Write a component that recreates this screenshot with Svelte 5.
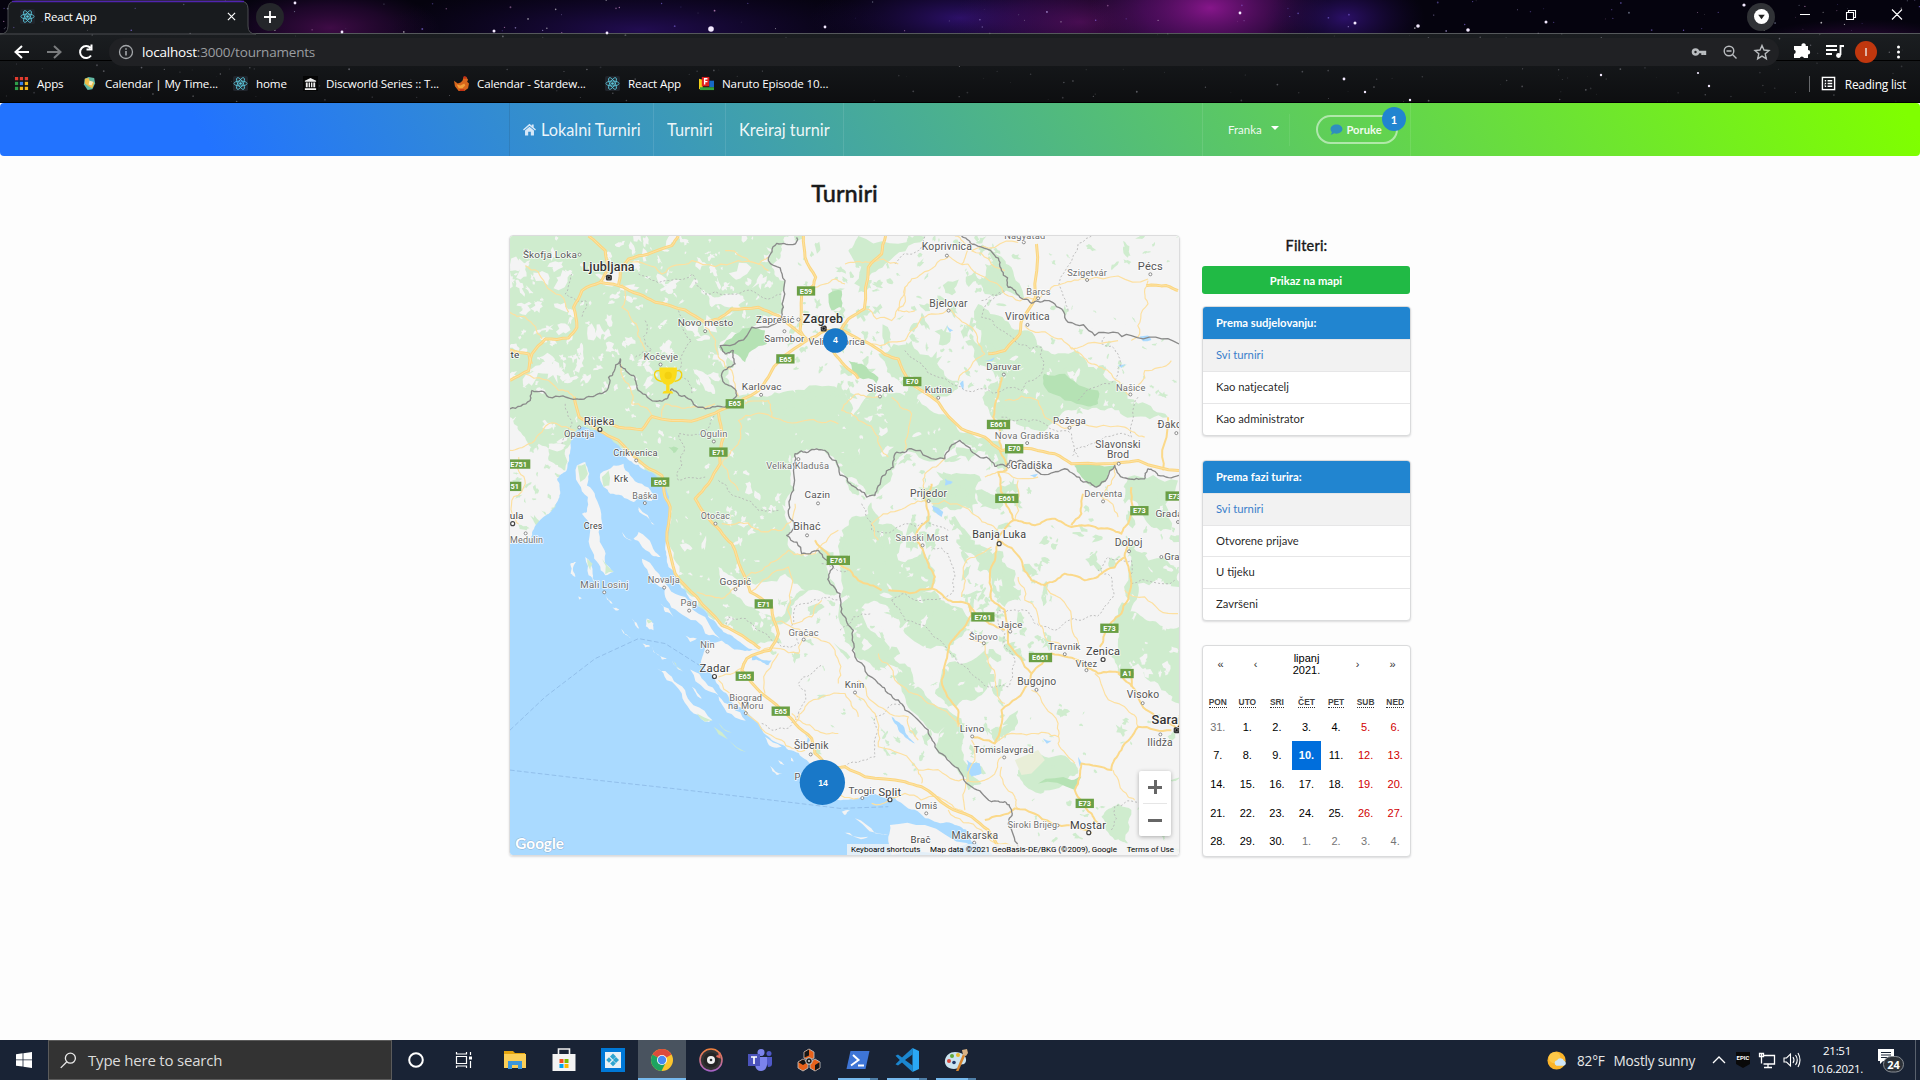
<script>
  // Deterministic pseudo random source, so that stars and map texture are stable.
  function makeRng(seed) {
    let s = seed;
    return () => {
      s = (s * 1664525 + 1013904223) % 4294967296;
      return s / 4294967296;
    };
  }

  const starRng = makeRng(77);
  const starColors = ['#fff', '#9a7dff', '#c9b8ff', '#7d6ad8', '#e6a3e0', '#8891a8'];
  const stars = Array.from({ length: 360 }, () => {
    const y = starRng() * 103;
    return {
      x: starRng() * 1920,
      y,
      r: 0.35 + starRng() * 0.6,
      o: (y > 33 ? 0.12 : 0.35) + starRng() * 0.35,
      c: y > 33 ? '#b9b9c4' : starColors[Math.floor(starRng() * 6)]
    };
  });
  const brightStars = [
    [711, 29, 2.8], [295, 3, 1.4], [494, 31, 1.5], [342, 32, 1.4], [825, 27, 1.4], [607, 33, 1.4],
    [1240, 13, 1.4], [1355, 23, 1.5], [1418, 26, 1.8], [1468, 30, 1.8], [1546, 22, 1.5], [1344, 79, 1.4],
    [1365, 92, 1.2], [1601, 75, 1.2], [1709, 86, 1.2], [1698, 73, 1.1], [1410, 100, 1.2], [1744, 5, 1.6]
  ];

  const rng = makeRng(2021);

  // Midpoint displacement turns a coarse outline into a natural looking line.
  function rough(text, amp = 0.16, depth = 2, close = false) {
    let pts = text.trim().split(/\s+/).map((p) => p.split(',').map(Number));
    if (close) pts = [...pts, pts[0]];
    for (let i = 0; i < depth; i++) {
      const out = [pts[0]];
      for (let k = 1; k < pts.length; k++) {
        const [ax, ay] = pts[k - 1];
        const [bx, by] = pts[k];
        const n = (rng() - 0.5) * 2 * amp;
        out.push([(ax + bx) / 2 - (by - ay) * n, (ay + by) / 2 + (bx - ax) * n]);
        out.push(pts[k]);
      }
      pts = out;
    }
    return 'M' + pts.map((p) => p[0].toFixed(1) + ' ' + p[1].toFixed(1)).join('L') + (close ? 'Z' : '');
  }

  function speck(x, y, size) {
    const n = 9 + Math.floor(rng() * 6);
    const turn = rng() * 3;
    const flat = 0.3 + rng() * 0.5;
    const pts = [];
    for (let i = 0; i < n; i++) {
      const a = (i / n) * Math.PI * 2;
      const r = size * (0.3 + rng() * 0.95);
      const px = Math.cos(a) * r;
      const py = Math.sin(a) * r * flat;
      pts.push((x + px * Math.cos(turn) - py * Math.sin(turn)).toFixed(1) + ',' + (y + px * Math.sin(turn) + py * Math.cos(turn)).toFixed(1));
    }
    return pts.join(' ');
  }

  function scatter(count, x0, y0, x1, y1, min, max) {
    return Array.from({ length: count }, () => speck(x0 + rng() * (x1 - x0), y0 + rng() * (y1 - y0), min + rng() * rng() * (max - min)));
  }

  const greenSpecks = [
    ...scatter(150, 850, 16, 1500, 500, 6, 44),
    ...scatter(70, 1450, 16, 2020, 600, 6, 28),
    ...scatter(80, 1000, 640, 1500, 1000, 8, 50),
    ...scatter(40, 1500, 740, 2020, 1000, 8, 38),
    ...scatter(80, 800, 1080, 1500, 1640, 6, 34),
    ...scatter(60, 1380, 960, 1640, 1300, 8, 38),
    ...scatter(50, 1400, 1400, 2020, 1860, 6, 24),
    ...scatter(30, 14, 640, 200, 900, 8, 26)
  ];
  const whiteSpecks = [
    ...scatter(270, 14, 16, 880, 480, 5, 42),
    ...scatter(60, 200, 430, 900, 900, 4, 24),
    ...scatter(70, 500, 800, 880, 1280, 5, 36),
    ...scatter(50, 1000, 440, 1500, 720, 4, 26),
    ...scatter(50, 1420, 280, 1900, 640, 4, 30),
    ...scatter(90, 1000, 900, 1500, 1600, 5, 34),
    ...scatter(50, 1750, 800, 2023, 1400, 5, 28),
    ...scatter(25, 14, 560, 200, 900, 6, 26)
  ];

  const forests = [
    '14,16 850,16 830,60 800,110 840,150 830,250 740,290 640,350 690,400 660,440 690,495 760,500 860,480 1005,480 1010,650 900,660 860,700 870,780 850,880 860,960 900,975 940,930 990,960 1000,1090 900,1090 860,1150 800,1190 830,1240 750,1250 700,1210 640,1180 570,1100 520,1040 480,930 495,830 460,750 400,700 340,650 240,600 200,620 180,720 130,700 80,660 40,600 14,560',
    '1005,640 1040,690 1110,800 1060,800 1020,740 940,670 900,640 760,520 1005,470 1040,560 1140,480 1230,500 1330,560 1400,610 1490,640 1500,700 1370,640 1320,680 1200,660 1160,720 1120,790 1080,800',
    '1420,220 1500,270 1570,300 1640,370 1720,360 1800,440 1900,520 1990,560 1880,560 1800,540 1700,540 1640,580 1600,600 1520,570 1460,560 1440,480 1480,450 1420,400',
    '1005,770 1100,800 1120,880 1200,930 1180,990 1250,960 1290,1020 1280,1080 1150,1090 1060,1060 1005,1000',
    '1005,1010 1060,1060 1120,1090 1190,1090 1290,1080 1330,1120 1400,1170 1370,1220 1330,1260 1200,1210 1150,1130 1080,1120 1120,1220 1200,1300 1240,1370 1300,1430 1380,1490 1300,1510 1230,1450 1180,1360 1080,1290 1050,1280 1005,1180',
    '1860,930 2023,1010 2023,1070 1900,1060 1870,1150 1840,1160 1880,980',
    '1830,1160 1900,1150 1960,1180 2023,1190 2023,1420 1960,1360 1900,1300 1860,1350 1820,1280',
    '1450,960 1530,1020 1540,1110 1500,1130 1460,1060',
    '1320,1310 1440,1260 1460,1320 1420,1400 1330,1430 1290,1390',
    '1540,1620 1620,1580 1710,1600 1720,1630 1680,1650 1580,1680',
    '1790,1760 1840,1720 1880,1740 1870,1840 1830,1830',
    '1260,20 1140,100 1080,170 1030,60 1060,16 1250,16',
    '1870,740 2020,750 2000,900 1940,890 1900,820 1860,800',
    '1240,770 1330,740 1430,750 1420,820 1350,840 1250,810',
    '1440,100 1520,110 1560,210 1440,190',
    '1320,1480 1380,1480 1370,1560 1430,1660 1390,1680 1300,1570',
    '1440,1500 1540,1440 1530,1500 1470,1540',
    '1120,370 1220,330 1290,390 1370,450 1340,490 1230,470 1160,440'
  ].map((p) => rough(p, 0.2, 3, true));

  const parks = [
    '640,350 690,310 740,290 780,300 785,340 740,360 720,395 690,370 655,365',
    '1618,430 1680,430 1740,470 1780,480 1780,520 1750,528 1680,510 1620,470',
    '1708,705 1830,705 1800,755 1770,770 1730,740',
    '1030,390 1070,400 1120,440 1115,460 1060,440',
    '490,650 520,655 505,668', '970,190 1010,180 1010,230 980,240', '1700,1650 1730,1640 1710,1680 1600,1660'
  ].map((p) => rough(p, 0.15, 2, true));

  const meadows = [
    '860,700 900,660 960,665 1005,720 1080,795 1110,800 1090,850 1010,900 1000,1000 950,950 900,980 850,910 870,790',
    '880,240 1005,240 1005,330 940,320 890,310', '270,130 350,110 340,160 300,165',
    '640,1010 700,1060 780,1090 800,1150 740,1130 680,1090', '720,1060 840,1030 900,1080 830,1160 760,1140',
    '130,640 190,650 100,640 14,700 14,930 80,900 160,740 175,720 130,690',
    '1440,740 1700,740 1740,790 1700,860 1560,900 1440,830', '1600,1120 1700,1230 1840,1230 1800,1420 1600,1400 1560,1300',
    '600,180 640,200 700,190 720,210 620,230', '560,410 600,430 630,490 600,480'
  ].map((p) => rough(p, 0.2, 3, true));

  // The open sea runs past the map's left and bottom edges.
  const sea = [
    '14,940 75,925 95,880 150,830 165,790 155,745 183,722 195,660 207,605 232,588 285,602 325,635 372,690 425,720 470,755 492,800 494,880 480,950 490,1010 520,1060 560,1110 610,1160 655,1205 705,1235 765,1262 720,1262 660,1240 640,1225 655,1230 600,1245 588,1300 628,1345 650,1380 690,1425 760,1480 800,1530 850,1560 905,1590 930,1620 950,1680 1000,1710 1060,1705 1100,1690 1165,1700 1210,1735 1280,1770 1350,1785 1385,1800 1400,1835 1440,1860 1480,1900 1500,2600 -900,2600 -900,960 -60,940',
    '740,1274 800,1290 790,1305 740,1290', '1385,1590 1425,1600 1430,1630 1400,1640 1385,1620',
    '1160,1460 1200,1500 1230,1540 1190,1510', '900,1510 915,1530 905,1550', '1615,1525 1640,1532 1625,1540', '1320,745 1345,755 1320,765'
  ].map((p) => rough(p, 0.12, 3, true));

  const lakes = [
    '1905,318 1930,315 1940,328 1915,332', '1840,405 1865,402 1850,412', '1280,825 1315,845 1310,860 1285,840',
    '1325,285 1345,300 1335,305', '1365,460 1375,450 1375,480', '1575,735 1600,730 1590,742', '1730,1600 1720,1580 1725,1610', '1440,390 1470,380 1460,392'
  ].map((p) => rough(p, 0.1, 1, true));

  const islands = [
    '215,705 240,695 252,730 245,765 270,800 288,850 280,905 298,960 300,1000 325,1025 300,1035 280,1000 262,965 255,900 230,850 245,845 248,800 220,760',
    '285,730 325,705 355,700 375,735 410,760 442,790 440,812 400,800 385,815 350,795 315,790 295,770',
    '385,925 400,905 440,945 466,980 440,975 405,940', '410,985 450,1020 490,1070 540,1100 600,1160 645,1225 600,1210 572,1170 520,1145 485,1110 480,1075 430,1030',
    '240,980 262,1030 268,1055 250,1035', '300,1095 322,1120 315,1118', '195,1000 212,995 203,1020 210,1040 196,1030', '218,1098 230,1104 222,1108',
    '322,1132 342,1138 330,1140', '380,1165 402,1195 390,1185', '425,1165 445,1180 445,1200 422,1188', '347,1195 378,1225 355,1210',
    '440,1250 485,1285 470,1288 445,1265', '535,1215 575,1225 555,1235', '412,1240 435,1247 420,1252',
    '455,1315 500,1340 540,1380 565,1425 622,1470 600,1475 555,1440 530,1390 485,1350', '500,1290 535,1325 515,1312',
    '555,1318 600,1355 640,1395 600,1378', '640,1398 680,1430 722,1472 690,1462 650,1422', '560,1370 590,1405 575,1395',
    '795,1608 832,1632 815,1635', '820,1590 838,1605 825,1600', '780,1520 830,1550 800,1550', '465,1120 505,1160 480,1145', '855,1580 866,1595 858,1592',
    '400,830 450,885 440,880 402,845', '350,905 380,930 365,925', '1155,1785 1260,1785 1390,1840 1330,1875 1160,1875 1150,1820', '1050,1765 1150,1815 1110,1810', '1010,1745 1035,1742 1020,1755', '1005,1800 1090,1820 1060,1825'
  ].map((p) => rough(p, 0.14, 2, true));
  const islandWoods = ['217,705 240,700 248,730 225,755', '290,740 310,720 312,765 295,770', '245,985 262,1000 255,1020', '290,985 325,1025 300,1032', '575,1450 622,1472 600,1475', '640,1478 680,1508 660,1502', '625,1490 670,1530 722,1566 690,1550 640,1512', '425,1168 442,1172 430,1180', '505,1293 530,1318 515,1310'].map((p) => rough(p, 0.14, 1, true));

  const motorways = [
    '250,16 300,60 310,110 285,155 230,180 205,230 215,290 190,322 120,325 80,370 70,420 14,450', '14,358 70,370 78,400',
    '520,16 500,45 430,70 370,85 345,120 340,165', '285,155 340,165 400,190 450,215 540,238 600,275 640,265 680,235 760,230 820,255 880,305 905,325',
    '895,16 900,80 932,140 925,165 890,190 885,300 905,330', '905,330 830,380 790,440 760,480 715,505 690,520 630,548 560,572 440,558 410,598 340,590 300,575',
    '207,500 222,560 280,600 340,630 400,690 470,735 480,800 495,830 485,930 510,1030 575,1100 650,1185 730,1230 765,1255',
    '640,548 655,620 645,700 610,760 570,805 600,850 645,900 680,940 710,1020 735,1085 800,1130 820,1210 795,1260 725,1285 710,1320 770,1390 830,1440 870,1480 920,1525 930,1570 970,1610 1020,1610 1080,1640 1200,1655 1250,1670 1330,1730 1400,1760 1450,1800 1480,1850',
    '905,330 960,300 1015,300 1085,335 1140,372 1180,385 1210,450 1300,515 1370,595 1440,620 1490,660 1580,655 1650,670 1700,700 1800,700 1900,690 2023,720',
    '975,350 1010,395 1050,430 1060,445', '1142,16 1130,70 1090,110 1078,235 1030,265 1005,300', '1595,40 1592,200 1550,270 1545,310 1500,360 1450,370', '1925,165 1985,165 2020,180'
  ].map((p) => rough(p, 0.05, 2));
  const highways = [
    '1485,660 1505,720 1480,725 1495,800 1520,850 1525,870 1480,920 1475,960 1455,1040 1460,1110 1500,1140 1510,1240 1580,1330 1570,1360 1490,1440 1470,1540 1400,1520',
    '1480,930 1550,990 1580,1050 1620,1065 1680,1030 1740,1050 1790,1030 1860,980 1875,940', '1525,870 1590,885 1650,865 1700,890 1780,895 1850,910 1870,880 1880,770',
    '1990,560 1975,720', '1700,885 1730,850 1735,790', '1860,980 1880,1060 1850,1150 1800,1210 1785,1250', '1580,1330 1640,1270 1720,1290 1780,1330 1850,1330 1885,1330 1880,1370',
    '1840,1330 1900,1400 1960,1470 2020,1500', '2000,1500 1900,1490 1850,1560 1820,1620 1730,1600 1710,1680 1760,1750 1780,1780', '1440,1770 1530,1735 1640,1780 1760,1810',
    '1150,1080 1280,1075 1330,1110 1390,1120 1400,1155 1360,1210 1330,1260 1310,1350 1360,1440 1365,1490', '930,930 1000,1000 1060,1050 1130,1080', '1390,1120 1440,1170 1500,1200',
    '1490,440 1480,480 1465,560 1490,660', '1280,760 1260,800 1270,870 1230,920 1260,980 1290,1040 1280,1075'
  ].map((p) => rough(p, 0.1, 3));
  const minorRoads = [
    '14,245 60,260 110,325', '60,105 120,160 190,245', '350,160 350,230 400,300 420,360', '370,90 470,130 560,90 700,90 790,120', '600,290 640,380 680,420 700,500',
    '345,400 370,460 380,520 440,558', '60,430 160,480 210,500', '470,560 480,520 560,530 630,520', '720,520 790,510 800,560 700,570 690,650 650,700', '800,560 900,570 1000,580',
    '14,660 70,640 130,580 210,600', '40,680 60,760 20,850 40,880', '650,880 750,895 830,900 870,820', '700,780 650,700', '575,1085 650,1105 710,1060 780,1010 850,960 930,970 1000,900',
    '735,1085 850,1010 860,1180 920,1160 950,1110', '800,1170 900,1220 990,1260 1000,1360', '765,1265 880,1270 890,1230', '720,1290 640,1340', '640,1350 720,1440 830,1530 900,1560', '780,1390 820,1270',
    '870,1480 900,1430 1020,1390 1060,1460', '860,1450 930,1500 1000,1510', '1330,75 1440,140 1500,190 1595,205', '1330,80 1250,130 1200,170 1180,240 1230,240', '1080,235 1160,270 1200,170',
    '1020,100 1090,95 1180,100', '1500,120 1400,60 1540,35', '1600,205 1670,160 1750,148 1930,145', '1930,150 1930,220 1905,310 1880,330', '1700,350 1760,400 1820,430 1875,495', '1100,340 1200,330 1250,260 1330,235 1400,290 1440,370',
    '1360,450 1440,370', '1560,285 1630,310 1700,355 1840,330', '1500,510 1600,510 1620,560 1690,592 1860,590 1920,620', '1880,480 1920,420 2000,390', '1125,500 1060,490 1010,540 1060,570 1120,620 1150,680', '1160,500 1220,550 1200,660',
    '1320,680 1260,730 1270,800', '1260,810 1180,840 1100,880 1120,930', '1280,820 1420,860 1480,900', '1440,740 1480,725 1600,740', '1830,700 1820,760 1790,800 1840,860', '1530,870 1540,750', '1370,1100 1380,1000 1460,950',
    '1390,1225 1440,1240 1470,1350 1500,1420', '1540,1040 1560,1110 1600,1160 1620,1220 1700,1260', '1620,1060 1700,1160 1720,1250', '1860,1080 1920,1100 2020,1150', '1580,1380 1660,1480 1660,1540 1710,1600', '1770,1330 1860,1430 1900,1490',
    '1470,1540 1580,1510 1660,1520', '1400,1530 1390,1650 1380,1740', '1120,1270 1180,1360 1270,1420 1360,1490', '1060,1350 1110,1420 1210,1460 1240,1530', '1050,1390 1110,1450 1120,1550 1240,1620 1250,1660', '1240,1620 1350,1650 1440,1650 1490,1580',
    '1490,1610 1530,1700 1540,1740', '1825,1620 1870,1700 1890,1710', '1100,1720 1200,1690 1300,1700 1380,1750', '1330,1740 1430,1800 1530,1850', '950,1700 1060,1705', '1370,100 1400,50 1350,16', '660,60 760,100 790,80', '930,170 990,145 1020,160'
  ].map((p) => rough(p, 0.16, 3));

  const frontiers = [
    '875,20 870,40 815,38 790,90 840,150 835,230 830,265 740,290 645,345 660,370 685,360 690,400 655,420 660,460 695,495 660,530 600,535 550,505 500,475 485,505 450,512 395,470 385,435 350,410 345,385 325,425 310,440 305,480 270,495 215,505 130,500 80,480 75,510 14,535',
    '1370,16 1400,40 1470,75 1490,120 1510,170 1545,200 1580,218 1600,212 1650,220 1690,275 1770,315 1880,315 2023,340',
    '1005,735 1040,765 1085,800 1110,795 1130,740 1165,710 1175,665 1220,655 1320,685 1365,630 1410,670 1470,708 1505,708 1515,690 1550,690 1600,725 1680,715 1735,755 1775,770 1830,705 1870,745 1920,745 1930,715 1960,735 2023,735',
    '1005,735 960,660 910,665 870,670 865,700 865,780 850,850 865,895 845,915 890,970 940,960 985,1010 975,1060 1005,1090 1020,1160 1045,1200 1050,1280 1120,1360 1150,1390 1200,1440 1270,1500 1290,1550 1350,1610 1400,1670 1460,1715 1500,1715 1520,1740 1510,1780 1540,1850'
  ].map((p) => rough(p, 0.18, 3));
  const counties = [
    '200,130 180,190 240,210 230,260', '400,130 480,150 560,130 600,190 720,180 830,190', '520,240 560,330 520,420 560,490', '180,520 200,580 170,640', '420,270 440,360 390,380', '630,545 600,600 520,610 530,700 520,750 600,740', '640,750 700,800 760,840 820,840',
    '655,1190 670,1160 760,1200 830,1250 880,1240 870,1130 940,1110 1005,1110', '880,1450 900,1380 880,1360 950,1300', '770,1480 800,1500 870,1470 880,1450', '1160,1110 1200,1090 1340,1090 1350,1040 1330,970 1280,950', '1160,1110 1200,1170 1330,1260 1380,1310 1450,1370 1510,1370 1530,1300 1500,1210 1480,1140 1560,1140 1590,1180 1650,1200 1730,1170 1810,1120 1820,1040 1780,1020 1810,980 1880,990 1880,1060 2010,1050',
    '1005,1200 1100,1150', '1005,1610 1110,1580 1120,1500 1110,1460 1200,1430', '1170,100 1240,60 1260,16', '1430,210 1500,180 1430,260 1490,300 1540,340 1610,350 1600,440 1550,480 1380,480 1260,410 1200,360', '1690,240 1670,180 1720,40 1760,16', '1800,320 1790,340 1840,370 1840,430 1720,510', '1490,560 1600,570 1700,610 1720,680', '1900,500 1880,620 1760,640 1700,680', '1820,1800 1830,1730 1910,1720', '950,1000 1030,1020', '1070,820 1100,900 1200,880 1330,900'
  ].map((p) => rough(p, 0.18, 3));
  const ferries = ['14,1500 120,1400 270,1285 400,1225 480,1240 590,1310', '14,1620 200,1642 500,1675 840,1715 1005,1735 1150,1730'];

  // [text, centre x, baseline y, font size, style, marker x, marker y]
  const towns = [
    ['Škofja Loka', 134, 81, 28, 'mid', 223, 72], ['Ljubljana', 310, 122, 35, 'big', 311, 141], ['Novo mesto', 601, 287, 28, 'mid', 600, 302], ['Zaprešić', 811, 276, 27, 'mid', 880, 267],
    ['Zagreb', 954, 276, 35, 'big', 956, 294], ['Samobor', 838, 334, 27, 'mid', 838, 302], ['Velika Gorica', 995, 342, 26, 'mid', 0, 0], ['Kočevje', 467, 388, 27, 'mid', 466, 402], ['Karlovac', 770, 480, 28, 'mid', 768, 493],
    ['te', 29, 382, 28, 'dark', 0, 0], ['Rijeka', 282, 583, 31, 'dark', 284, 597], ['Opatija', 222, 620, 26, 'mid', 222, 591], ['Ogulin', 626, 620, 26, 'soft', 626, 633], ['Crikvenica', 391, 678, 26, 'mid', 393, 690],
    ['Krk', 348, 755, 26, 'dark', 0, 0], ['Baška', 419, 805, 25, 'soft', 419, 818], ['Velika Kladuša', 878, 716, 26, 'soft', 880, 686], ['Cazin', 937, 803, 28, 'mid', 939, 819], ['Otočac', 631, 866, 25, 'soft', 631, 880],
    ['Cres', 264, 895, 25, 'dark', 0, 0], ['Bihać', 906, 899, 30, 'mid', 906, 915], ['ula', 34, 867, 28, 'dark', 22, 880], ['Medulin', 64, 937, 25, 'soft', 61, 909], ['Mali Losinj', 298, 1074, 27, 'soft', 297, 1086],
    ['Novalja', 476, 1059, 26, 'soft', 477, 1072], ['Gospić', 691, 1064, 28, 'mid', 691, 1077], ['Pag', 551, 1128, 26, 'soft', 552, 1141], ['Gračac', 896, 1217, 26, 'soft', 896, 1228], ['Nin', 607, 1252, 26, 'soft', 607, 1264],
    ['Zadar', 629, 1326, 32, 'dark', 628, 1339], ['Biograd', 722, 1412, 26, 'soft', 0, 0], ['na Moru', 722, 1438, 26, 'soft', 722, 1449], ['Šibenik', 919, 1558, 29, 'mid', 917, 1573], ['Primošten', 935, 1650, 26, 'mid', 0, 0],
    ['Koprivnica', 1326, 59, 29, 'mid', 1326, 75], ['Nagyatád', 1560, 24, 26, 'soft', 1557, 35], ['Szigetvár', 1747, 136, 26, 'soft', 1747, 148], ['Pécs', 1937, 117, 31, 'mid', 1937, 131], ['Barcs', 1601, 192, 26, 'soft', 1600, 203],
    ['Bjelovar', 1331, 228, 29, 'mid', 1331, 240], ['Virovitica', 1568, 268, 29, 'mid', 1568, 283], ['Daruvar', 1496, 419, 27, 'mid', 1497, 432], ['Sisak', 1126, 486, 30, 'mid', 1125, 498], ['Kutina', 1301, 488, 26, 'mid', 1300, 502],
    ['Našice', 1878, 481, 26, 'soft', 1877, 492], ['Požega', 1694, 581, 27, 'mid', 1694, 592], ['Nova Gradiška', 1567, 625, 27, 'soft', 1567, 638], ['Đakovo', 2012, 592, 29, 'mid', 2015, 608], ['Slavonski', 1840, 652, 29, 'mid', 0, 0],
    ['Brod', 1840, 684, 29, 'mid', 1842, 700], ['Gradiška', 1580, 717, 29, 'mid', 1511, 708], ['Prijedor', 1271, 799, 29, 'mid', 1271, 812], ['Derventa', 1796, 800, 26, 'soft', 1795, 813], ['Sanski Most', 1251, 931, 26, 'soft', 1253, 945],
    ['Banja Luka', 1483, 924, 30, 'dark', 1483, 940], ['Doboj', 1872, 948, 29, 'mid', 1873, 963], ['Gradačac', 2018, 861, 28, 'mid', 2020, 875], ['Gračanica', 2046, 989, 27, 'mid', 1970, 980], ['Jajce', 1517, 1193, 27, 'mid', 1516, 1204],
    ['Šipovo', 1436, 1228, 26, 'soft', 1437, 1239], ['Travnik', 1679, 1259, 27, 'mid', 1680, 1272], ['Zenica', 1795, 1274, 31, 'dark', 1795, 1288], ['Vitez', 1745, 1309, 26, 'mid', 1745, 1320], ['Bugojno', 1596, 1364, 29, 'mid', 1595, 1379],
    ['Knin', 1049, 1375, 27, 'mid', 1050, 1387], ['Visoko', 1915, 1405, 29, 'mid', 1914, 1419], ['Sarajevo', 2017, 1481, 36, 'big', 2016, 1500], ['Ilidža', 1966, 1549, 29, 'mid', 1967, 1513], ['Livno', 1402, 1507, 28, 'mid', 1402, 1519],
    ['Tomislavgrad', 1497, 1570, 27, 'mid', 1498, 1582], ['Trogir', 1071, 1692, 28, 'mid', 1072, 1704], ['Split', 1155, 1698, 31, 'dark', 1155, 1709], ['Omiš', 1264, 1736, 26, 'mid', 1264, 1750], ['Siroki Brijeg', 1583, 1795, 25, 'soft', 1658, 1786],
    ['Mostar', 1750, 1796, 31, 'dark', 1752, 1808], ['Makarska', 1410, 1826, 29, 'mid', 1408, 1838], ['Brač', 1247, 1840, 27, 'dark', 0, 0]
  ];

  const shields = [
    ['E59', 903, 181], ['E65', 841, 385], ['E65', 689, 520], ['E71', 640, 665], ['E65', 465, 755], ['E751', 40, 701], ['51', 28, 768], ['E70', 1222, 453], ['E661', 1481, 582], ['E70', 1528, 655], ['E661', 1506, 804],
    ['E73', 1904, 841], ['E73', 2010, 797], ['E761', 1000, 990], ['E71', 776, 1121], ['E65', 719, 1338], ['E65', 827, 1443], ['E761', 1434, 1160], ['E73', 1814, 1194], ['E661', 1607, 1282], ['A1', 1867, 1330], ['E73', 1740, 1720]
  ];

  const bookmarks = [
    { icon: 'apps', label: 'Apps', w: 68 }, { icon: 'stone', label: 'Calendar | My Time...', w: 151 }, { icon: 'react', label: 'home', w: 70 },
    { icon: 'bank', label: 'Discworld Series :: T...', w: 151 }, { icon: 'hen', label: 'Calendar - Stardew...', w: 151 }, { icon: 'react', label: 'React App', w: 94 }, { icon: 'af', label: 'Naruto Episode 10...', w: 140 }
  ];

  const filters = [
    { title: 'Prema sudjelovanju:', items: ['Svi turniri', 'Kao natjecatelj', 'Kao administrator'] },
    { title: 'Prema fazi turira:', items: ['Svi turniri', 'Otvorene prijave', 'U tijeku', 'Završeni'] }
  ];
  const weekdays = ['PON', 'UTO', 'SRI', 'ČET', 'PET', 'SUB', 'NED'];
  const days = [31, ...Array.from({ length: 30 }, (_, i) => i + 1), 1, 2, 3, 4].map((n, i) => ({
    n, out: i === 0 || i > 30, weekend: i % 7 > 4, today: i === 10
  }));
  const apps = ['explorer', 'store', 'kodi', 'chrome', 'groove', 'teams', 'hex', 'shell', 'code', 'paint'];
</script>

{#snippet reactIcon()}
  <svg class="fav" viewBox="0 0 16 16"><rect width="16" height="16" rx="2" fill="#20242b" /><g fill="none" stroke="#5cc8dd" stroke-width=".9"><ellipse cx="8" cy="8" rx="7" ry="2.7" /><ellipse cx="8" cy="8" rx="7" ry="2.7" transform="rotate(60 8 8)" /><ellipse cx="8" cy="8" rx="7" ry="2.7" transform="rotate(120 8 8)" /></g><circle cx="8" cy="8" r="1.4" fill="#5cc8dd" /></svg>
{/snippet}

<div class="screen">
  <header class="browser">
    <svg class="sky" viewBox="0 0 1920 103">
      <defs>
        <radialGradient id="neb"><stop offset="0" stop-color="#8d1791" stop-opacity=".95" /><stop offset=".55" stop-color="#5d0f70" stop-opacity=".6" /><stop offset="1" stop-color="#40105a" stop-opacity="0" /></radialGradient>
        <radialGradient id="neb2"><stop offset="0" stop-color="#35137e" stop-opacity=".8" /><stop offset="1" stop-color="#1c0844" stop-opacity="0" /></radialGradient>
        <linearGradient id="bar" x2="0" y2="1"><stop offset="0" stop-color="#1b1e21" /><stop offset="1" stop-color="#0d0e10" /></linearGradient>
      </defs>
      <rect width="1920" height="103" fill="#05030e" />
      <ellipse cx="330" cy="28" rx="110" ry="40" fill="url(#neb)" opacity=".45" />
      <ellipse cx="640" cy="30" rx="260" ry="50" fill="url(#neb2)" opacity=".75" />
      <ellipse cx="960" cy="18" rx="150" ry="45" fill="url(#neb2)" />
      <ellipse cx="1080" cy="22" rx="130" ry="50" fill="url(#neb)" opacity=".5" />
      <ellipse cx="1210" cy="8" rx="120" ry="64" fill="url(#neb)" />
      <ellipse cx="1345" cy="18" rx="80" ry="45" fill="url(#neb2)" />
      <ellipse cx="1860" cy="45" rx="110" ry="26" fill="url(#neb)" opacity=".35" />
      <rect y="33" width="1920" height="70" fill="url(#bar)" />
      <rect y="33" width="1920" height="1" fill="#55585b" />
      <rect y="60" width="1920" height="1" fill="#000" />
      <path d="M0 34q8 0 8-8V9q0-8 8-8H240q8 0 8 8V26q0 8 8 8z" fill="#181b1e" stroke="#4a4d50" />
      <path d="M12 1.5H244" stroke="#5024b0" stroke-width="1.5" />
      {#each stars as s}<circle cx={s.x} cy={s.y} r={s.r} fill={s.c} opacity={s.o} />{/each}
      {#each brightStars as [x, y, r]}<circle cx={x} cy={y} {r} fill="#f3e9ff" />{/each}
      <rect y="102" width="1920" height="1" fill="#000" />
    </svg>
    <div class="tabs">
      <div class="tab">{@render reactIcon()}<span class="ui">React App</span><svg class="x" viewBox="0 0 10 10"><path d="M1 1l8 8M9 1l-8 8" /></svg></div>
      <div class="plus"><svg viewBox="0 0 12 12"><path d="M6 0v12M0 6h12" /></svg></div>
      <div class="grow"></div>
      <div class="caret"><svg viewBox="0 0 16 16"><circle cx="8" cy="8" r="8" fill="#fff" /><path d="M4.5 6h7L8 11z" fill="#222" /></svg></div>
      <svg class="wins" viewBox="0 0 138 28" fill="none" stroke="#fff" stroke-width="1.1"><path d="M18 14.5h10M64.500 12.500h7v7h-7zM66.500 12.500v-2h7v7h-2M110 9.500l10 10M120 9.500l-10 10" /></svg>
    </div>
    <div class="toolbar">
      <svg class="navs" viewBox="0 0 109 36" fill="none" stroke="#fff" stroke-width="2"><path d="M29 18H16M22 12l-6.500 6 6.500 6" /><path d="M47 18h13M54 12l6.500 6-6.500 6" stroke="#7a7c7e" /><path d="M91 21.500A6 6 0 1 1 90.500 14M91.500 10.500v5h-5" /></svg>
      <div class="omni">
        <svg class="o16" viewBox="0 0 16 16" fill="none" stroke="#a4a7aa" stroke-width="1.3"><circle cx="8" cy="8" r="6.500" /><path d="M8 7v4.500M8 4.300v1.400" stroke-width="1.600" /></svg>
        <span class="url"><b>localhost</b>:3000/tournaments</span>
        <svg class="omni-icons" viewBox="0 0 90 20" fill="none" stroke="#b9bcbf" stroke-width="1.400">
          <circle cx="6.500" cy="10" r="2.500" stroke-width="2.600" /><path d="M9 10h7v3M13.500 10v3" stroke-width="2.400" />
          <circle cx="40" cy="9" r="4.800" /><path d="M43.500 12.500l4 4M37.500 9h5" /><path d="M73 3.500l2 4.500 5 .5-3.800 3.300 1.100 4.900L73 14.100l-4.300 2.600 1.100-4.900L66 8.500l5-.5z" />
        </svg>
      </div>
      <svg class="ext" viewBox="0 0 141 36"><path d="M21 12h3.500a2.200 2.200 0 1 1 4.200 0H31v4a2.200 2.200 0 1 1 0 4.400V24H27a2.200 2.200 0 0 0-4.200 0H17v-4a2.200 2.200 0 0 0 0-4.300V12z" fill="#fff" transform="translate(-2 0)" /><path d="M47 12h11M47 16h11M47 20h6M61.500 21v-9h3.500" fill="none" stroke="#fff" stroke-width="1.800" /><circle cx="59.500" cy="21.500" r="2.400" fill="#fff" /><circle cx="87" cy="18" r="11" fill="#c0370e" /><path d="M87 14v8" stroke="#e9d3cc" stroke-width="1.600" /><g fill="#fff"><circle cx="119.500" cy="13" r="1.500" /><circle cx="119.500" cy="18" r="1.500" /><circle cx="119.500" cy="23" r="1.500" /></g></svg>
    </div>
    <div class="marks">
      {#each bookmarks as b}
        <div class="mark" style:width="{b.w}px">
          {#if b.icon === 'react'}{@render reactIcon()}
          {:else if b.icon === 'apps'}
            <svg class="fav" viewBox="0 0 16 16"><path d="M1 1h3.500v3.500H1zM6.200 1h3.500v3.500H6.200zM11.500 1H15v3.500h-3.500z" fill="#e23c2f" /><path d="M1 6.200h3.500v3.500H1z" fill="#2f9f4a" /><path d="M6.200 6.200h3.500v3.500H6.200z" fill="#3a80e8" /><path d="M11.500 6.200H15v3.500h-3.500z" fill="#f2b61c" /><path d="M1 11.500h3.500V15H1z" fill="#2f9f4a" /><path d="M6.200 11.500h3.500V15H6.200zM11.500 11.500H15V15h-3.500z" fill="#f2b61c" /></svg>
          {:else if b.icon === 'stone'}
            <svg class="fav" viewBox="0 0 16 16"><path d="M3 3l4-2 6 1 1 6-3 6-5 1-4-6z" fill="#63b9a4" /><path d="M3 3l4-1 1 3 5 2-2 6-4-2-4-3z" fill="#f0c14a" /><path d="M8 5l4 1-2 4-3-1z" fill="#f7eec2" /></svg>
          {:else if b.icon === 'bank'}
            <svg class="fav" viewBox="0 0 16 16"><rect width="16" height="16" fill="#050505" /><path d="M2 5l6-3 6 3v1H2zM3 7h2v5H3zM6 7h1.500v5H6zM8.500 7H10v5H8.500zM11 7h2v5h-2zM2 13h12v2H2z" fill="#eee" /></svg>
          {:else if b.icon === 'hen'}
            <svg class="fav" viewBox="0 0 16 16"><path d="M0 5l4 3 3-1 2-2 1-3 3-1 2 3-1 2 2 2-1 5-4 3H5L1 11z" fill="#d8661c" /><path d="M3 9l4 1 4-2 1 2-3 3H5z" fill="#f4a13b" /><path d="M9.500 1l2-1 2 1v2h-3zM6 14h5v2H6z" fill="#c43216" /></svg>
          {:else}
            <svg class="fav" viewBox="0 0 16 16"><path d="M0 3l4 1v9l-4 1z" fill="#f2cf19" /><path d="M3 1h8v10H3z" fill="#e02020" /><path d="M11 5h5v7h-5z" fill="#1769c7" /><path d="M1 12h15v3H1z" fill="#37a33b" /><path d="M6 9V3h3M6 6h3" stroke="#fff" stroke-width="1.500" fill="none" /></svg>
          {/if}
          <span class="ui">{b.label}</span>
        </div>
      {/each}
      <div class="grow"></div>
      <div class="reading"><svg viewBox="0 0 16 16" fill="none" stroke="#fff" stroke-width="1.500"><rect x="1.500" y="1.500" width="13" height="13" /><path d="M4 5h1.500M7 5h5M4 8h1.500M7 8h5M4 11h1.500M7 11h5" /></svg><span class="ui">Reading list</span></div>
    </div>
  </header>

  <nav class="nav">
    <div class="inner">
      <div class="item brand"><svg viewBox="0 0 14 14"><path d="M7 .8L0 7l1 1 6-5 6 5 1-1-2.500-2.200V1.500h-2v1.500zM2.200 8L7 4l4.800 4v5.500H8.400V9.500H5.600v4H2.200z" /></svg>Lokalni Turniri</div>
      <div class="item">Turniri</div>
      <div class="item last">Kreiraj turnir</div>
      <div class="grow"></div>
      <div class="right">
        <div class="user">Franka<i></i></div>
        <div class="pill"><svg viewBox="0 0 14 12"><path d="M7 .5c3.600 0 6.500 2.200 6.500 5s-2.900 5-6.500 5c-1 0-1.900-.2-2.700-.5C3.400 11 2 11.600.6 11.600 1.500 10.800 2 9.800 2 8.800 1 8 .5 6.800.5 5.500c0-2.800 2.900-5 6.500-5z" /></svg>Poruke<em>1</em></div>
      </div>
    </div>
  </nav>

  <main class="page">
    <section class="left">
      <h1>Turniri</h1>
      <div class="map">
        <svg viewBox="14 16 2009 1859" preserveAspectRatio="none">
          <rect x="14" y="16" width="2009" height="1859" fill="#f4f4f4" />
          <g fill="#cfecce">
            {#each forests as d}<path {d} />{/each}
          </g>
          <g fill="#f4f4f4">
            {#each meadows as d}<path {d} />{/each}
            {#each whiteSpecks as p}<polygon points={p} />{/each}
          </g>
          <g fill="#cfecce">{#each greenSpecks as p}<polygon points={p} />{/each}</g>
          <g fill="#b5e2b4">{#each parks as d}<path {d} />{/each}</g>
          <path d="M1530 1590l70-30 20 30-40 40-30 5z" fill="#e9eed8" />
          <g fill="#aadaff">{#each [...sea, ...lakes] as d}<path {d} />{/each}</g>
          <g fill="#f4f4f4">{#each islands as d}<path {d} />{/each}</g>
          <g fill="#cfecce">{#each islandWoods as d}<path {d} />{/each}</g>
          <g fill="none" stroke="#b3b3b3" stroke-width="2.500" stroke-dasharray="6 6">{#each counties as d}<path {d} />{/each}</g>
          <g fill="none" stroke="#8db9e6" stroke-width="2.500" stroke-dasharray="14 7">{#each ferries as p}<polyline points={p} />{/each}</g>
          <g fill="none" stroke-linejoin="round">
            <g stroke="#fde0a0" stroke-width="3.500">{#each minorRoads as d}<path {d} />{/each}</g>
            <g stroke="#fbd98a" stroke-width="6">{#each highways as d}<path {d} />{/each}</g>
            <g stroke="#fbd681" stroke-width="9">{#each motorways as d}<path {d} />{/each}</g>
            <g stroke="#fee9b5" stroke-width="2">{#each motorways as d}<path {d} />{/each}</g>
            <g stroke="#8a8a8a" stroke-width="4">{#each frontiers as d}<path {d} />{/each}</g>
          </g>
          {#each shields as [t, x, y]}
            <rect x={x - t.length * 7.5 - 5} y={y - 14} width={t.length * 15 + 10} height="28" fill="#6a9f44" />
            <text class="shield" {x} y={y + 8}>{t}</text>
          {/each}
          {#each towns as [t, x, y, size, kind, mx, my]}
            {#if mx}
              {#if kind === 'big'}<rect x={mx - 9} y={my - 9} width="18" height="18" rx="5" fill="#333" /><circle cx={mx} cy={my} r="4.500" fill="#111" stroke="#aaa" stroke-width="1.500" />
              {:else}<circle cx={mx} cy={my} r={kind === 'dark' ? 6 : 4.5} fill="#fff" stroke={kind === 'dark' ? '#444' : '#777'} stroke-width={kind === 'dark' ? 3.5 : 2.5} />{/if}
            {/if}
            <text class="town {kind}" {x} {y} font-size={size * 1.07}>{t}</text>
          {/each}
          <g stroke="#f5d20a" fill="none" stroke-width="4"><path d="M464 421c-22-6-22 28 6 32M514 421c22-6 22 28-6 32" /><path d="M463 411h52c2 30-6 48-22 52v18c6 0 10 2 11 8h-32c1-6 5-8 11-8v-18c-14-4-22-22-20-52z" fill="#fbdc1c" stroke="none" /><circle cx="489" cy="435" r="11" fill="#f3d010" stroke="none" /></g>
          <circle cx="991" cy="330" r="37" fill="#1978c8" /><text class="count" x="991" y="338">4</text>
          <circle cx="952" cy="1657" r="68" fill="#1978c8" /><text class="count" x="954" y="1667">14</text>
          <text class="google" x="30" y="1856">Google</text>
        </svg>
        <div class="zoom"><span class="p"></span><span class="m"></span></div>
        <div class="legal"><span>Keyboard shortcuts</span><span>Map data ©2021 GeoBasis-DE/BKG (©2009), Google</span><span>Terms of Use</span></div>
      </div>
    </section>
    <aside class="side">
      <h2>Filteri:</h2>
      <button>Prikaz na mapi</button>
      {#each filters as f}
        <ul class="menu"><li class="head">{f.title}</li>{#each f.items as it, i}<li class:active={i === 0}>{it}</li>{/each}</ul>
      {/each}
      <div class="cal">
        <div class="calnav"><span>«</span><span>‹</span><span class="month">lipanj<br />2021.</span><span>›</span><span>»</span></div>
        <div class="grid wd">{#each weekdays as w}<span><abbr>{w}</abbr></span>{/each}</div>
        <div class="grid">{#each days as d}<span class="day" class:weekend={d.weekend} class:out={d.out} class:today={d.today}>{d.n}.</span>{/each}</div>
      </div>
    </aside>
  </main>

  <footer class="task">
    <div class="start"><svg viewBox="0 0 16 16" fill="#fff"><path d="M0 2.200l6.600-.9v6.200H0zM7.400 1.200L16 0v7.500H7.400zM0 8.300h6.600v6.200L0 13.700zM7.400 8.300H16V16l-8.600-1.200z" /></svg></div>
    <div class="search"><svg viewBox="0 0 18 18" fill="none" stroke="#e8e8e8" stroke-width="1.400"><circle cx="11" cy="6.500" r="5.300" /><path d="M7 10.500L.8 16.800" /></svg><span>Type here to search</span></div>
    <div class="ico"><svg viewBox="0 0 24 24"><circle cx="12" cy="12" r="6.800" fill="none" stroke="#fff" stroke-width="2" /></svg></div>
    <div class="ico tv"><svg viewBox="0 0 24 24" fill="none" stroke="#fff" stroke-width="1.200"><path d="M4.500 8.500h10v7h-10zM4.500 4v2h10V4M4.500 20v-2h10v2M18.500 4v3M18.500 13v7" /><path d="M17 8.500h3v3h-3z" fill="#fff" stroke="none" /></svg></div>
    {#each apps as a}
      <div class="ico app" class:on={a === 'chrome'} class:run={a === 'shell' || a === 'code' || a === 'paint'}>
        <svg viewBox="0 0 24 24">
          {#if a === 'explorer'}<path d="M1 3h9l2 2h10v15H1z" fill="#e5a50f" /><path d="M1 6h22v14H1z" fill="#fccf57" /><path d="M5 13h14v8h-4v-4H9v4H5z" fill="#3c97dd" />
          {:else if a === 'store'}<path d="M6.500 6V1h11v5" fill="none" stroke="#eee" stroke-width="1.600" /><path d="M.5 6h23v17H.5z" fill="#f3f3f3" /><path d="M7.500 11h4v4h-4z" fill="#f25022" /><path d="M12.500 11h4v4h-4z" fill="#7fba00" /><path d="M7.500 16h4v4h-4z" fill="#00a4ef" /><path d="M12.500 16h4v4h-4z" fill="#ffb900" />
          {:else if a === 'kodi'}<path d="M0 0h24v24H0z" fill="#0078d7" /><path d="M4 4h16v16H4z" fill="#e9f1f6" /><path d="M12 5.500l3 3-3 3-3-3zM8 9.200l2.800 2.800L8 14.800 5.200 12zM15 9l3 3-3 3-3-3zM12 12.700l2.800 2.800-2.800 2.800-2.800-2.800z" fill="#2fa5d0" />
          {:else if a === 'chrome'}<circle cx="12" cy="12" r="11" fill="#fbc52e" /><path d="M12 12L2.500 6.500A11 11 0 0 1 21.500 6.500z" fill="#dd4b3c" /><path d="M12 12L2.500 6.500A11 11 0 0 0 11.500 23l4-8z" fill="#1ea361" /><circle cx="12" cy="12" r="5" fill="#fff" /><circle cx="12" cy="12" r="4.200" fill="#4a8af4" />
          {:else if a === 'groove'}<defs><linearGradient id="gr" x2="0" y2="1"><stop stop-color="#f0803c" /><stop offset="1" stop-color="#a763c9" /></linearGradient></defs><circle cx="12" cy="12" r="11" fill="#333" stroke="url(#gr)" stroke-width="1.600" /><circle cx="12" cy="12" r="7.500" fill="#252525" /><path d="M20.500 4.500v4.500l-3-1" fill="none" stroke="#e06a5a" stroke-width="2" /><circle cx="12" cy="12" r="4" fill="#f2f2f2" /><circle cx="12" cy="12" r="1.300" fill="#333" />
          {:else if a === 'teams'}<circle cx="13" cy="4.500" r="3.500" fill="#7b83eb" /><circle cx="21" cy="5.500" r="2.500" fill="#5059c9" /><path d="M17 9h7v7q0 3-4 3z" fill="#5059c9" /><path d="M7 9h12v8q-1 6-6 6t-6-6z" fill="#7b83eb" /><path d="M0 6h12v12H0z" fill="#4b53bc" /><path d="M3 9h6M6 9v7" stroke="#fff" stroke-width="1.700" />
          {:else if a === 'hex'}<g fill="#e8621b" stroke="#bbb" stroke-width=".9"><path d="M12 1l5 3v6l-5 3-5-3V4zM6 11l5 3v6l-5 3-5-3v-6zM18 11l5 3v6l-5 3-5-3v-6z" /></g><path d="M12 1.500v6l-4.500 2V4.300zM1.500 14.300L6 17l4.500-2.700L6 11.500zM18 17v5.500l4.500-2.700v-5.500z" fill="#151515" /><circle cx="12" cy="13" r="3.300" fill="#222" stroke="#ccc" /><circle cx="12" cy="13" r="1" fill="#ddd" />
          {:else if a === 'shell'}<path d="M4.500 3h19l-4 18h-19z" fill="#3e75d6" /><path d="M7 7l5.500 5L5 17.500M12 17.500h6" stroke="#fff" stroke-width="2" fill="none" />
          {:else if a === 'code'}<path d="M17.500 0v6.500L10 12l7.500 5.500V24L7 14.500l-4 3-2.500-1.300L4.800 12 .5 7.800 3 6.500l4 3z" fill="#1b86cf" /><path d="M17.500 0L24 3v18l-6.500 3z" fill="#2aa7f5" />
          {:else}<path d="M11 4c7 0 12 4 11 9-1 4-4 3-6 4s-1 4-6 4C4 21 0 17 1 12s5-8 10-8z" fill="#cbe3ef" /><circle cx="5" cy="13" r="2" fill="#d9473c" /><circle cx="8" cy="8" r="2" fill="#5fa83a" /><circle cx="14" cy="7" r="2" fill="#e9b82e" /><circle cx="10" cy="14.500" r="1.800" fill="#213a6b" /><path d="M12 23l7-17 2.500 1-7 16z" fill="#d6852f" /><path d="M19 7l-1-5 5-1 1 4-2 3z" fill="#d8b183" />{/if}
        </svg>
      </div>
    {/each}
    <div class="grow"></div>
    <div class="weather"><svg viewBox="0 0 22 22"><circle cx="10" cy="11" r="9.500" fill="#fbb429" /><circle cx="8" cy="8" r="6" fill="#ffd257" opacity=".7" /><path d="M10 16.500a3 3 0 0 1 .5-5.800 4 4 0 0 1 7.300.6 2.700 2.700 0 0 1 0 5.200z" fill="#cfe6f8" /></svg><span>82°F</span><span>Mostly sunny</span></div>
    <svg class="tray" viewBox="0 0 88 24" fill="none" stroke="#fff" stroke-width="1.300"><path d="M2 15l6-6 6 6" /><path d="M25 4h14v12l-7 4-7-4z" fill="#090909" stroke="none" /><path d="M50.500 6.500v-1h-2v3h4v-3h-2v10M53 7.500h10.500v8.500h-11M57 16v3M53 19.500h8" /><path d="M73 10h2.500l4-4v12l-4-4H73zM82 9q2 3 0 6M84.500 7q3.500 5 0 10M87 5q4 7 0 14" stroke-width="1.100" /><text x="32" y="12" class="epic">EPIC</text></svg>
    <div class="clock"><span>21:51</span><span>10.6.2021.</span></div>
    <div class="notes"><svg viewBox="0 0 26 26"><path d="M0 2h16v12H5l-3 3v-3H0z" fill="#fff" /><path d="M3 5.500h10M3 8h10M3 10.500h7" stroke="#192335" stroke-width="1.200" /><rect x="5.500" y="9.500" width="20" height="15.500" rx="7.700" fill="#2c3138" stroke="#8a8f96" /><text x="15.500" y="21.500">24</text></svg></div>
  </footer>
</div>

<style>
  :global(body) { margin: 0; background: #fdfdfd; }
  .screen { width: 1920px; height: 1080px; display: flex; flex-direction: column; overflow: hidden; font-family: Lato, sans-serif; background: #fdfdfd; }
  .grow { flex: 1; }
  .browser { position: relative; height: 103px; flex: none; display: flex; flex-direction: column; color: #fff; }
  .sky { position: absolute; inset: 0; width: 1920px; height: 103px; }
  .tabs, .toolbar, .marks { position: relative; display: flex; align-items: center; }
  .tabs { height: 33px; }
  .toolbar { height: 37px; }
  .marks { height: 27px; padding-left: 14px; }
  .ui { font: 11.6px 'Open Sans', sans-serif; letter-spacing: -0.2px; white-space: nowrap; }
  .mark .ui { letter-spacing: -0.14px; }
  .fav { width: 15px; height: 15px; flex: none; }
  .tab { width: 216px; margin-left: 20px; display: flex; align-items: center; gap: 9px; }
  .x { width: 9px; height: 9px; margin-left: auto; stroke: #fff; stroke-width: 1.3; }
  .plus { width: 28px; height: 28px; margin-left: 20px; border-radius: 50%; background: #24262a; display: grid; place-items: center; }
  .plus svg { width: 12px; height: 12px; stroke: #fff; stroke-width: 1.8; }
  .caret { width: 28px; height: 28px; border-radius: 50%; background: #303236; display: grid; place-items: center; margin-right: 7px; }
  .caret svg { width: 15px; height: 15px; }
  .wins { width: 138px; height: 28px; align-self: flex-start; }
  .navs { width: 109px; height: 36px; }
  .omni { width: 1670px; height: 28px; border-radius: 14px; background: #202124; display: flex; align-items: center; }
  .o16 { width: 16px; height: 16px; margin: 0 8px 0 9px; }
  .url { font: 13.5px 'Open Sans', sans-serif; color: #9a9da1; letter-spacing: -0.19px; }
  .url b { font-weight: 400; color: #fff; }
  .omni-icons { width: 90px; height: 20px; margin-left: auto; }
  .ext { width: 141px; height: 36px; }
  .mark { display: flex; align-items: center; gap: 8px; flex: none; }
  .reading { display: flex; align-items: center; gap: 9px; height: 16px; border-left: 1px solid #66686b; padding: 0 14px 0 11px; }
  .reading .ui { font-size: 11.9px; }
  .reading svg { width: 15px; height: 15px; }

  .nav { height: 53px; flex: none; border-radius: 4px; background: linear-gradient(60deg, #2273ff 11%, #7fff00 99%); }
  .inner { width: 902px; height: 100%; margin: 0 auto; display: flex; border-left: 1px solid rgba(34, 36, 38, 0.12); color: rgba(255, 255, 255, 0.92); box-sizing: border-box; }
  .item { display: flex; align-items: center; font-size: 16.3px; padding: 0 13px 0; border-right: 1px solid rgba(255, 255, 255, 0.1); box-sizing: border-box; width: 72px; white-space: nowrap; }
  .brand { width: 144px; }
  .last { width: 118px; }
  .item svg { width: 13px; height: 13px; margin-right: 5px; fill: #d7e8f8; flex: none; }
  .right { width: 209px; display: flex; align-items: center; border-left: 1px solid rgba(255, 255, 255, 0.1); border-right: 1px solid rgba(255, 255, 255, 0.1); font-size: 11.5px; box-sizing: border-box; }
  .user { width: 87px; height: 32px; box-sizing: border-box; padding-left: 25px; display: flex; align-items: center; gap: 9px; border-right: 1px solid rgba(255, 255, 255, 0.08); }
  .user i { border: 4px solid transparent; border-top-color: #fff; border-bottom: 0; margin-top: -3px; }
  .pill { position: relative; width: 82px; height: 29px; margin-left: 26px; border: 2px solid rgba(255, 255, 255, 0.5); border-radius: 15px; display: flex; align-items: center; justify-content: center; gap: 3px; padding-right: 2px; box-sizing: border-box; font-weight: 700; font-size: 11.2px; }
  .pill svg { width: 13px; height: 11px; fill: #2f8fbf; }
  .pill em { position: absolute; right: -10px; top: -10px; width: 24px; height: 24px; border-radius: 50%; background: #2185d0; display: grid; place-items: center; font-style: normal; font-size: 11px; color: #fff; }

  .page { flex: 1; width: 902px; margin: 0 auto; display: flex; justify-content: space-between; }
  .left { width: 671px; }
  h1 { margin: 23px 0 0; height: 56px; line-height: 28px; text-align: center; font-size: 23.5px; font-weight: 500; color: #191a1b; -webkit-text-stroke: 0.45px #191a1b; }
  .map { position: relative; width: 669px; height: 619px; border: 1px solid #dcdcdd; border-radius: 4px; box-shadow: 0 1px 2px rgba(34, 36, 38, 0.15); overflow: hidden; }
  .map > svg { display: block; width: 669px; height: 619px; }
  .town { font-family: Roboto, sans-serif; letter-spacing: 0.6px; text-anchor: middle; paint-order: stroke; stroke: rgba(255, 255, 255, 0.85); stroke-width: 5px; stroke-linejoin: round; fill: #565656; }
  .town.soft { fill: #6e6e6e; }
  .town.dark { fill: #3e3e3e; }
  .town.big { fill: #333; font-weight: 500; }
  .shield { font: 700 22px Roboto, sans-serif; text-anchor: middle; fill: #fff; }
  .count { font: 700 26px 'Liberation Sans', sans-serif; text-anchor: middle; fill: #fff; }
  .google { font: 700 46px Lato, sans-serif; fill: #fff; paint-order: stroke; stroke: #8eb3d3; stroke-width: 3px; }
  .zoom { position: absolute; right: 8px; bottom: 19px; width: 32px; height: 65px; background: #fff; border-radius: 2px; box-shadow: 0 1px 4px rgba(0, 0, 0, 0.3); display: flex; flex-direction: column; }
  .zoom span { flex: 1; display: grid; place-items: center; }
  .zoom .p { border-bottom: 1px solid #e6e6e6; margin: 0 4px; }
  .zoom span::before, .zoom .p::after { content: ''; grid-area: 1 / 1; width: 14px; height: 3px; background: #666; }
  .zoom .p::after { width: 3px; height: 14px; }
  .legal { position: absolute; right: 0; bottom: 0; height: 11px; display: flex; justify-content: space-between; width: 323px; padding: 0 5px 0 4px; background: rgba(245, 245, 245, 0.75); font: 8px/12px Roboto, sans-serif; color: #000; white-space: nowrap; }

  .side { width: 209px; padding-top: 81px; box-sizing: border-box; display: flex; flex-direction: column; }
  h2 { margin: 0; font-size: 14.4px; line-height: 18px; text-align: center; color: #191a1b; font-weight: 500; letter-spacing: 0.2px; -webkit-text-stroke: 0.3px #191a1b; }
  button { margin: 11px 1px 12px 0; height: 28px; border: 0; border-radius: 3px; background: #21ba45; color: #fff; font: 700 11.2px Lato, sans-serif; flex: none; }
  .menu { list-style: none; margin: 0 0 24px; padding: 0; border: 1px solid #dadbdc; border-radius: 4px; box-shadow: 0 1px 2px rgba(34, 36, 38, 0.15); background: #fff; overflow: hidden; flex: none; }
  .menu li { height: 31.9px; line-height: 30px; padding-left: 13px; font-size: 11.25px; color: rgba(0, 0, 0, 0.87); border-top: 1px solid #e6e6e7; box-sizing: border-box; }
  .menu .head { background: #2185d0; color: #fff; font-weight: 700; border-top: 0; height: 32px; line-height: 32px; }
  .menu .active { background: #f2f2f2; color: #3b7fcb; }
  .cal { height: 210px; border: 1px solid #dadbdc; border-radius: 4px; box-shadow: 0 1px 2px rgba(34, 36, 38, 0.15); background: #fff; font-family: 'Liberation Sans', Arial, sans-serif; font-size: 11px; color: #000; overflow: hidden; flex: none; }
  .calnav { height: 35px; display: grid; grid-template-columns: 35px 35px 1fr 35px 35px; place-items: center; margin-bottom: 10px; color: #333; }
  .month { line-height: 12px; text-align: center; color: #000; }
  .grid { display: grid; grid-template-columns: repeat(7, 1fr); }
  .wd { height: 21px; align-items: center; text-align: center; font-size: 8.4px; font-weight: 700; color: #444; }
  abbr { border-bottom: 1px dotted #333; }
  .day { height: 28.7px; display: grid; place-items: center; }
  .weekend { color: #d10000; }
  .out { color: #757575; }
  .today { background: #006edc; color: #fff; font-weight: 700; }

  .task { height: 40px; flex: none; display: flex; align-items: center; background: #192335; color: #fff; font-family: 'Open Sans', sans-serif; }
  .start { width: 48px; display: grid; place-items: center; }
  .start svg { width: 16px; height: 16px; }
  .search { width: 344px; height: 40px; box-sizing: border-box; border: 1px solid #5b5b5b; background: #333; display: flex; align-items: center; padding-left: 11px; gap: 11px; font-size: 15px; letter-spacing: -0.2px; color: #dcdcdc; }
  .search svg { width: 17px; height: 17px; }
  .ico { width: 48px; height: 40px; display: grid; place-items: center; flex: none; }
  .ico svg { width: 24px; height: 24px; }
  .tv { margin-right: 3px; }
  .app { border-bottom: 2px solid transparent; box-sizing: border-box; margin-right: 1px; padding-top: 1px; }
  .app.on { background: #49535f; border-color: #76b9ed; }
  .app.run { background: linear-gradient(90deg, transparent 4px, #76b9ed 4px, #76b9ed 36px, #4f7fa8 36px, #4f7fa8 44px, transparent 44px) bottom / 100% 2px no-repeat; border: 0; padding-bottom: 1px; }
  .weather { display: flex; align-items: center; gap: 9px; font-size: 13.6px; letter-spacing: -0.2px; margin-right: 16px; color: #e8e8e8; }
  .weather svg { width: 21px; height: 21px; }
  .tray { width: 88px; height: 24px; overflow: visible; }
  .epic { font: 700 6px Roboto, sans-serif; text-anchor: middle; fill: #fff; stroke: none; }
  .clock { width: 62px; margin-left: 7px; display: flex; flex-direction: column; align-items: center; font-size: 11.5px; line-height: 18px; letter-spacing: -0.3px; }
  .notes { margin-left: 10px; height: 40px; display: flex; align-items: center; padding-right: 11px; border-right: 1px solid #59616d; margin-right: 4px; }
  .notes svg { width: 26px; height: 26px; }
  .notes text { font: 700 11px 'Open Sans', sans-serif; fill: #fff; text-anchor: middle; }
</style>
